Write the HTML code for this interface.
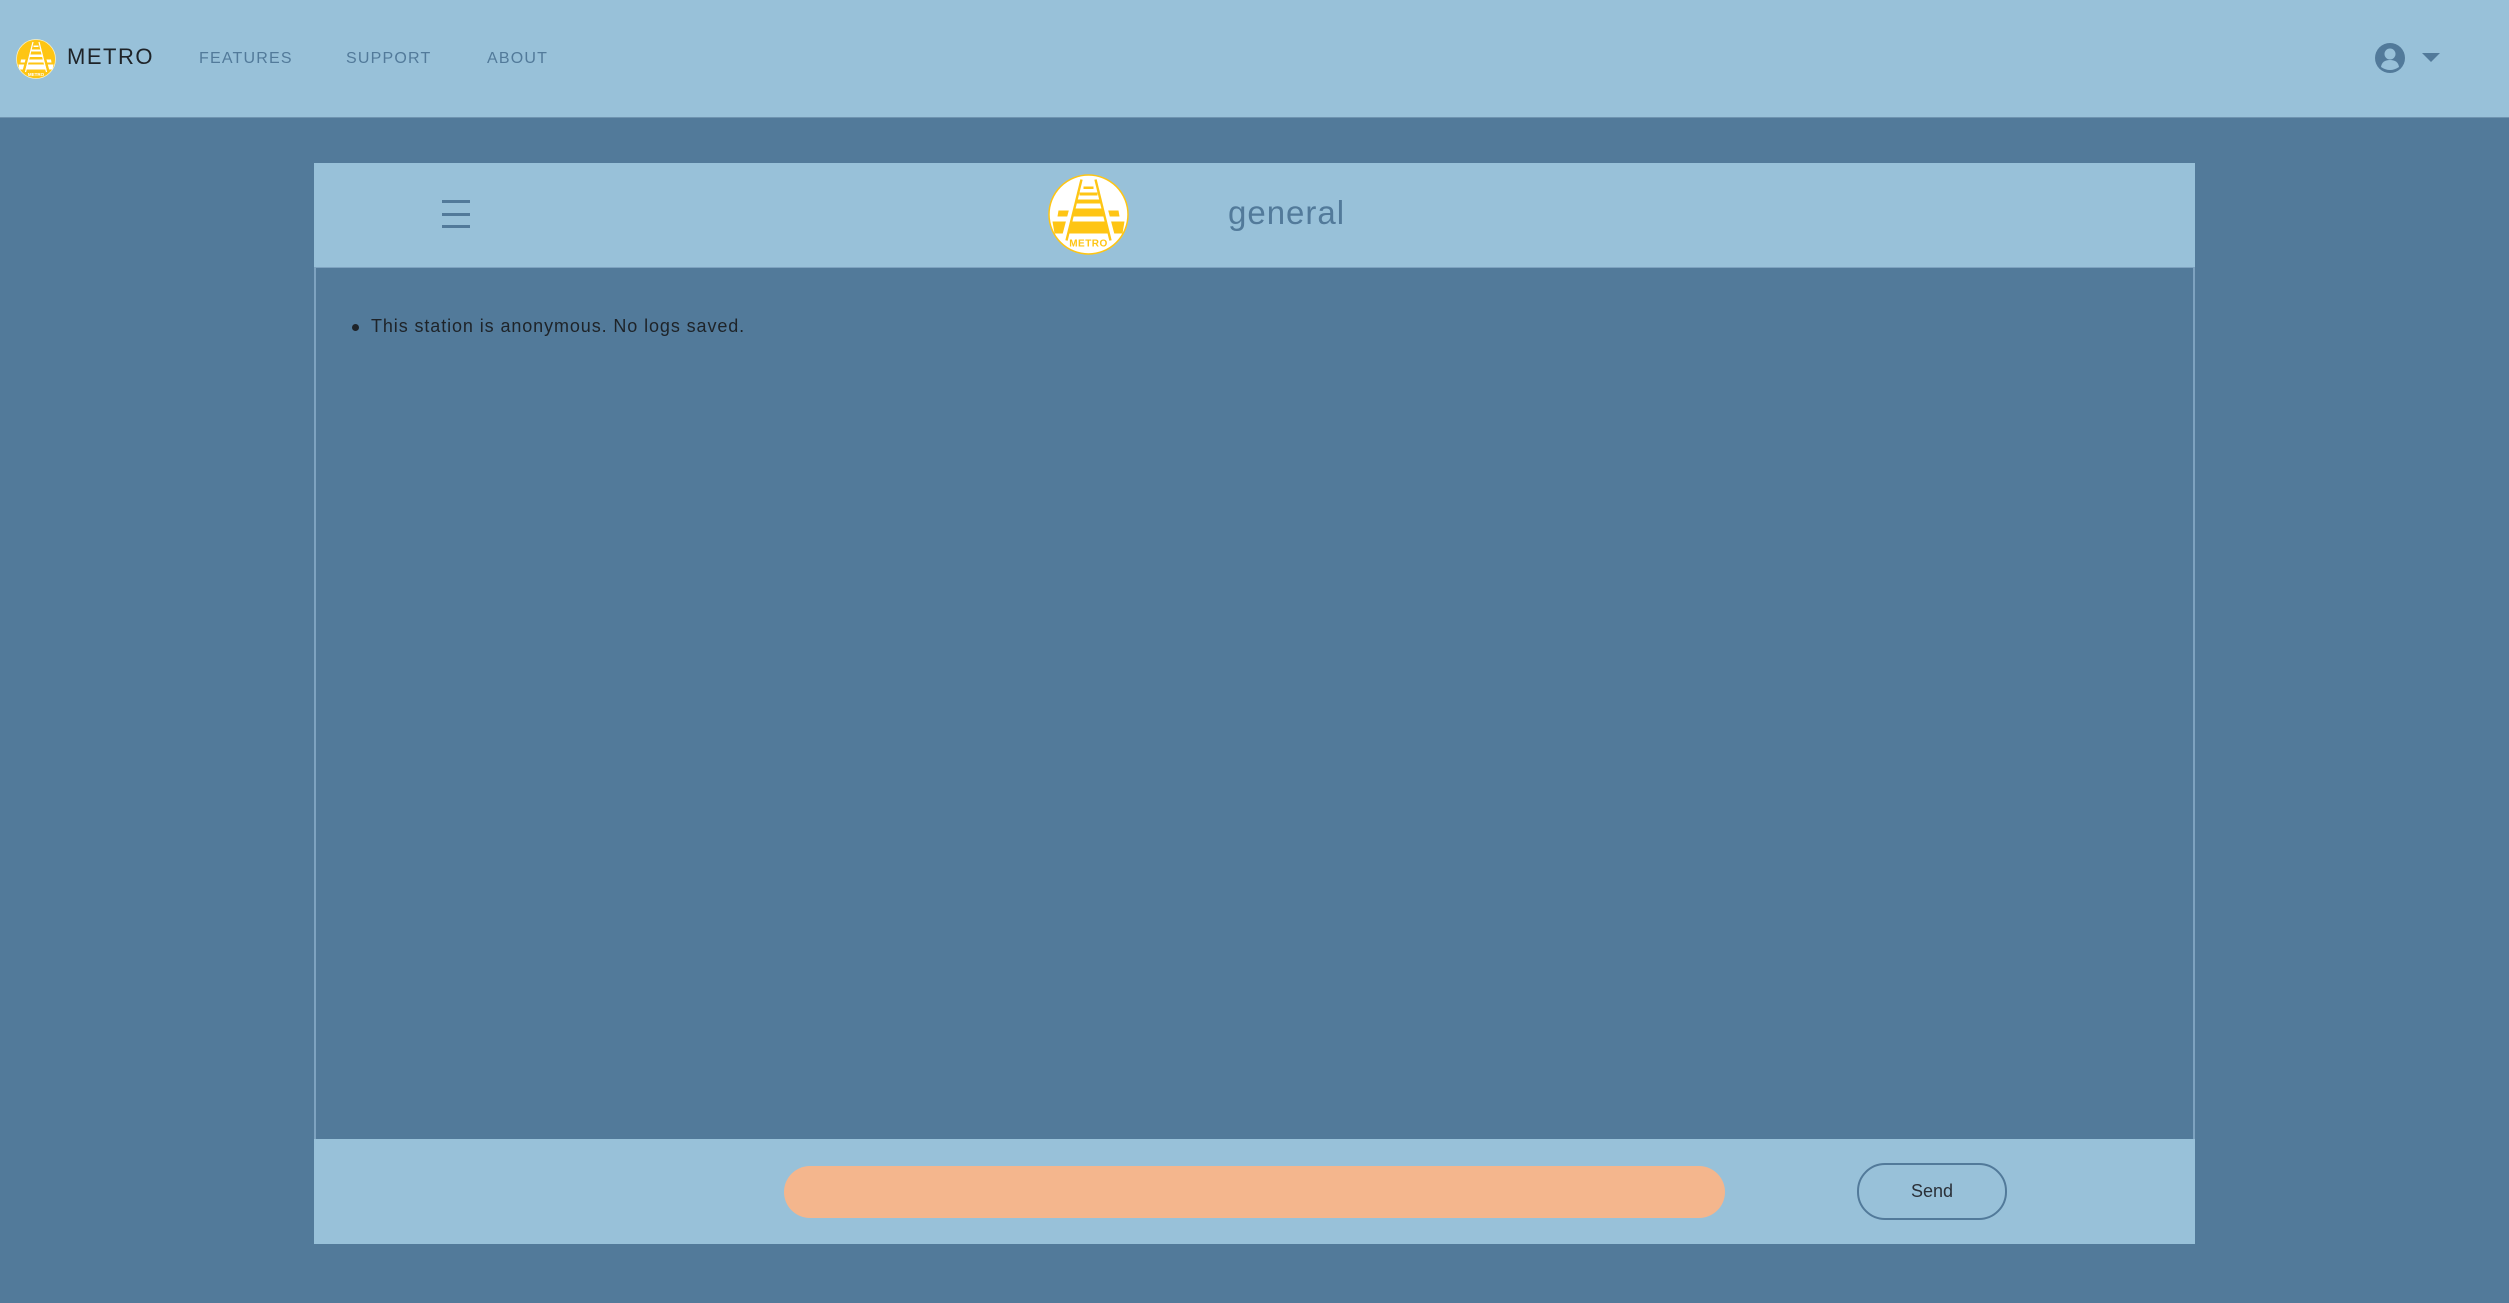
<!DOCTYPE html>
<html><head><meta charset="utf-8">
<style>
*{margin:0;padding:0;box-sizing:border-box}
html,body{width:2509px;height:1303px;overflow:hidden;background:#527a9a;font-family:"Liberation Sans",sans-serif}
.nav{position:absolute;left:0;top:0;width:2509px;height:118px;background:#98c1d9;border-bottom:1px solid #6f94b0}
.abs{position:absolute}
.brand{left:67px;top:44px;font-size:22px;letter-spacing:1.5px;color:#1e2328}
.link{top:50px;font-size:16px;letter-spacing:1.2px;color:#527a9a}
.card-h{position:absolute;left:314px;top:163px;width:1881px;height:104px;background:#98c1d9}
.card-b{position:absolute;left:314px;top:267px;width:1881px;height:872px;background:#527a9a;border-left:2px solid #7ea3c0;border-right:2px solid #7ea3c0;border-top:1px solid #7ea3c0}
.card-f{position:absolute;left:314px;top:1139px;width:1881px;height:105px;background:#98c1d9}
.ham{position:absolute;left:128px;width:28px;height:3px;background:#527a9a}
.general{left:1228px;top:194px;font-size:33px;color:#527a9a;letter-spacing:1px}
.msg{left:371px;top:316px;font-size:18px;letter-spacing:0.9px;color:#1e2328}
.dot{position:absolute;left:352px;top:324px;width:7px;height:7px;border-radius:50%;background:#1e2328}
.input{position:absolute;left:784px;top:1166px;width:941px;height:52px;border-radius:26px;background:#f4b68d}
.send{position:absolute;left:1857px;top:1163px;width:150px;height:57px;border:2px solid #527a9a;border-radius:28px;text-align:center;line-height:53px;font-size:18px;color:#2a3038}
</style></head><body>
<div class="nav"></div>
<svg class="abs" style="left:16px;top:39px" width="40" height="40" viewBox="-40 -40 80 80">
<circle r="39" fill="#fec514" stroke="#fff3c0" stroke-width="1.5"/>
<g fill="#fff">
<rect x="-5" y="-27" width="10" height="3"/><rect x="-9" y="-19" width="18" height="4"/><rect x="-16" y="-9" width="32" height="5"/>
<polygon points="-30,1 30,1 31,7 -31,7"/><polygon points="-35,11 35,11 33,21 -33,21"/>
</g>
<g stroke="#fec514" stroke-width="5"><line x1="-9" y1="-34" x2="-25" y2="26"/><line x1="9" y1="-34" x2="25" y2="26"/></g>
<g stroke="#fff" stroke-width="2.5"><line x1="-6" y1="-34" x2="-21" y2="26"/><line x1="6" y1="-34" x2="21" y2="26"/></g>
<text x="0" y="34" text-anchor="middle" font-size="9" font-weight="bold" fill="#fff" font-family="Liberation Sans">METRO</text>
</svg>
<div class="abs brand">METRO</div>
<div class="abs link" style="left:199px">FEATURES</div>
<div class="abs link" style="left:346px">SUPPORT</div>
<div class="abs link" style="left:487px">ABOUT</div>
<svg class="abs" style="left:2374px;top:42px" width="32" height="32" viewBox="0 0 32 32">
<circle cx="16" cy="16" r="15" fill="#527a9a"/>
<circle cx="16" cy="12" r="5.5" fill="#98c1d9"/>
<path d="M7 25 Q8 18 16 18 Q24 18 25 25 Q16 31 7 25Z" fill="#98c1d9"/>
</svg>
<svg class="abs" style="left:2422px;top:53px" width="18" height="10"><path d="M0 0H18L9 9Z" fill="#527a9a"/></svg>

<div class="card-h">
<div class="ham" style="top:37px"></div><div class="ham" style="top:50px"></div><div class="ham" style="top:62px"></div>
</div>
<svg class="abs" style="left:1048px;top:174px" width="81" height="81" viewBox="-40.5 -40.5 81 81">
<circle r="39.5" fill="#fff" stroke="#fec514" stroke-width="1.5"/>
<g fill="#fec514">
<rect x="-5" y="-28" width="10" height="2.5"/><rect x="-9" y="-22" width="18" height="3"/><rect x="-13" y="-15" width="26" height="4"/>
<rect x="-19" y="-6" width="38" height="6"/><polygon points="-30,-4 30,-4 31,2 -31,2"/>
<polygon points="-36,7 36,7 34,19 -34,19"/>
</g>
<g stroke="#fff" stroke-width="5"><line x1="-9" y1="-35" x2="-25" y2="26"/><line x1="9" y1="-35" x2="25" y2="26"/></g>
<g stroke="#fec514" stroke-width="2.4"><line x1="-7" y1="-35" x2="-22" y2="26"/><line x1="7" y1="-35" x2="22" y2="26"/></g>
<text x="0" y="32" text-anchor="middle" font-size="10" font-weight="bold" fill="#fec514" font-family="Liberation Sans" letter-spacing="0.5">METRO</text>
</svg>
<div class="abs general">general</div>
<div class="card-b"></div>
<div class="dot"></div>
<div class="abs msg">This station is anonymous. No logs saved.</div>
<div class="card-f"></div>
<div class="input"></div>
<div class="send">Send</div>
</body></html>
